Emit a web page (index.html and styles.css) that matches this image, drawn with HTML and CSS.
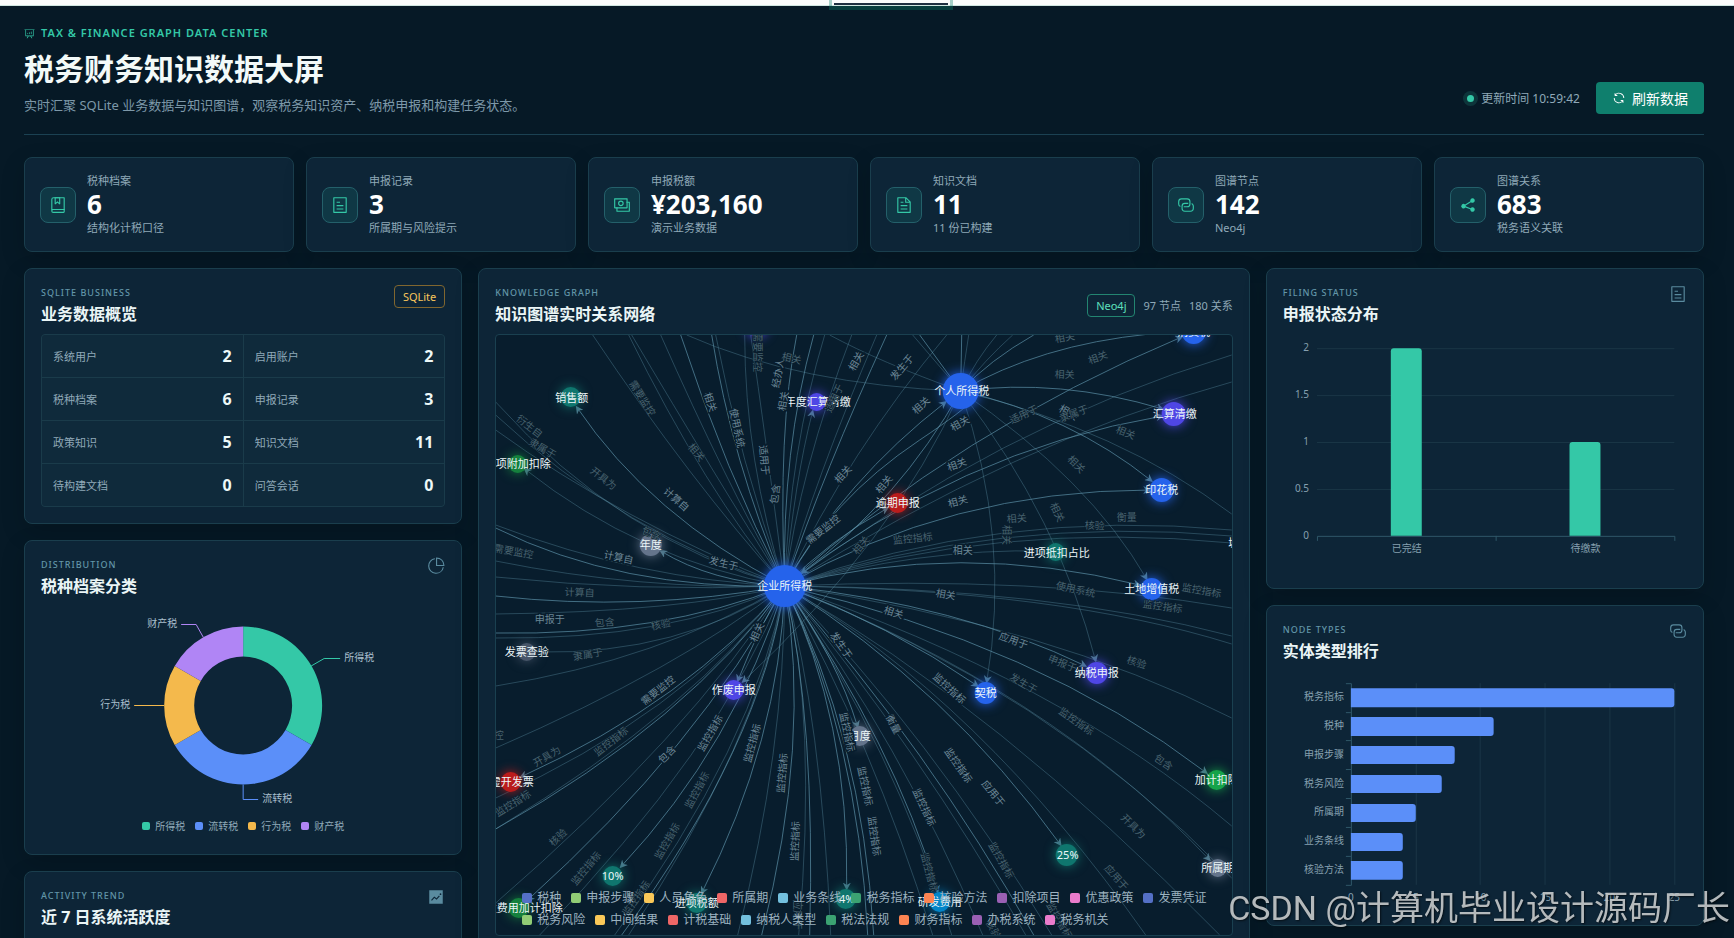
FILE: index.html
```html
<!DOCTYPE html>
<html lang="zh-CN">
<head>
  <meta charset="UTF-8" />
  <meta name="viewport" content="width=device-width, initial-scale=1" />
  <title>税务财务知识数据大屏</title>
  <link rel="stylesheet" href="styles.css">
</head>
<body>

<!-- Icon set -->
<svg class="icon-defs" aria-hidden="true">
  <symbol id="i-board" viewBox="0 0 1024 1024"><path d="m665.216 768 110.848 192h-73.856L591.36 768H433.024L322.176 960H248.32l110.848-192H160a32 32 0 0 1-32-32V192H64a32 32 0 0 1 0-64h896a32 32 0 1 1 0 64h-64v544a32 32 0 0 1-32 32zM832 192H192v512h640zM352 448a32 32 0 0 1 32 32v64a32 32 0 0 1-64 0v-64a32 32 0 0 1 32-32m160-64a32 32 0 0 1 32 32v128a32 32 0 0 1-64 0V416a32 32 0 0 1 32-32m160-64a32 32 0 0 1 32 32v192a32 32 0 1 1-64 0V352a32 32 0 0 1 32-32"/></symbol>
  <symbol id="i-refresh" viewBox="0 0 1024 1024"><path d="M771.776 794.88A384 384 0 0 1 128 512h64a320 320 0 0 0 555.712 216.448H654.72a32 32 0 1 1 0-64h149.056a32 32 0 0 1 32 32v148.928a32 32 0 1 1-64 0v-50.56zM276.288 295.616h92.992a32 32 0 0 1 0 64H220.16a32 32 0 0 1-32-32V178.56a32 32 0 0 1 64 0v50.56A384 384 0 0 1 896.128 512h-64a320 320 0 0 0-555.776-216.384z"/></symbol>
  <symbol id="i-book" viewBox="0 0 1024 1024"><path d="M192 736h640V128H256a64 64 0 0 0-64 64zm64-672h608a32 32 0 0 1 32 32v672a32 32 0 0 1-32 32H160l-32 57.536V192A128 128 0 0 1 256 64"/><path d="M240 800a48 48 0 1 0 0 96h592v-96zm0-64h656v160a64 64 0 0 1-64 64H240a112 112 0 0 1 0-224m144-608v250.88l96-76.8 96 76.8V128zm-64-64h320v381.44a32 32 0 0 1-51.968 24.96L480 384l-108.032 86.4A32 32 0 0 1 320 445.44z"/></symbol>
  <symbol id="i-tickets" viewBox="0 0 1024 1024"><path d="M192 128v768h640V128zm-32-64h704a32 32 0 0 1 32 32v832a32 32 0 0 1-32 32H160a32 32 0 0 1-32-32V96a32 32 0 0 1 32-32m160 448h384v64H320zm0-192h192v64H320zm0 384h384v64H320z"/></symbol>
  <symbol id="i-money" viewBox="0 0 1024 1024"><path d="M256 640v192h640V384H768v-64h150.976c14.272 0 19.456 1.472 24.64 4.288a29.06 29.06 0 0 1 12.16 12.096c2.752 5.184 4.224 10.368 4.224 24.64v493.952c0 14.272-1.472 19.456-4.288 24.64a29.06 29.06 0 0 1-12.096 12.16c-5.184 2.752-10.368 4.224-24.64 4.224H233.024c-14.272 0-19.456-1.472-24.64-4.288a29.06 29.06 0 0 1-12.16-12.096c-2.688-5.184-4.224-10.368-4.224-24.576V640z"/><path d="M768 192H128v448h640zm64-22.976v493.952c0 14.272-1.472 19.456-4.288 24.64a29.06 29.06 0 0 1-12.096 12.16c-5.184 2.752-10.368 4.224-24.64 4.224H105.024c-14.272 0-19.456-1.472-24.64-4.288a29.06 29.06 0 0 1-12.16-12.096C65.536 682.432 64 677.248 64 663.04V169.024c0-14.272 1.472-19.456 4.288-24.64a29.06 29.06 0 0 1 12.096-12.16C85.568 129.536 90.752 128 104.96 128h685.952c14.272 0 19.456 1.472 24.64 4.288a29.06 29.06 0 0 1 12.16 12.096c2.752 5.184 4.224 10.368 4.224 24.64z"/><path d="M448 576a160 160 0 1 1 0-320 160 160 0 0 1 0 320m0-64a96 96 0 1 0 0-192 96 96 0 0 0 0 192"/></symbol>
  <symbol id="i-document" viewBox="0 0 1024 1024"><path d="M832 384H576V128H192v768h640zm-26.496-64L640 154.496V320zM160 64h480l256 256v608a32 32 0 0 1-32 32H160a32 32 0 0 1-32-32V96a32 32 0 0 1 32-32m160 448h384v64H320zm0-192h160v64H320zm0 384h384v64H320z"/></symbol>
  <symbol id="i-connection" viewBox="0 0 1024 1024"><path d="M640 384v64H448a128 128 0 0 0-128 128v128a128 128 0 0 0 128 128h320a128 128 0 0 0 128-128V576a128 128 0 0 0-64-110.848V394.88c74.56 26.368 128 97.472 128 181.056v128a192 192 0 0 1-192 192H448a192 192 0 0 1-192-192V576a192 192 0 0 1 192-192z"/><path d="M384 640v-64h192a128 128 0 0 0 128-128V320a128 128 0 0 0-128-128H256a128 128 0 0 0-128 128v128a128 128 0 0 0 64 110.848v70.272A192.064 192.064 0 0 1 64 448V320a192 192 0 0 1 192-192h320a192 192 0 0 1 192 192v128a192 192 0 0 1-192 192z"/></symbol>
  <symbol id="i-share" viewBox="0 0 1024 1024"><path d="m679.872 348.8-301.76 188.608a127.808 127.808 0 0 1 5.12 52.16l279.936 104.96a128 128 0 1 1-22.464 59.904l-279.872-104.96a128 128 0 1 1-16.64-166.272l301.696-188.608a128 128 0 1 1 33.92 54.272z"/></symbol>
  <symbol id="i-pie" viewBox="0 0 1024 1024"><path d="M448 68.48v64.832A384.128 384.128 0 0 0 512 896a384.128 384.128 0 0 0 378.688-320h64.768A448.128 448.128 0 0 1 64 512 448.128 448.128 0 0 1 448 68.48"/><path d="M576 97.28V448h350.72A384.064 384.064 0 0 0 576 97.28M512 64V33.152A448 448 0 0 1 990.848 512H512z"/></symbol>
  <symbol id="i-trend" viewBox="0 0 1024 1024"><path d="M128 896V128h768v768zm291.712-327.296 128 102.4 180.16-201.792-47.744-42.624-139.84 156.608-128-102.4-180.16 201.792 47.744 42.624zM816 352a48 48 0 1 0-96 0 48 48 0 0 0 96 0"/></symbol>
</svg>

<div class="topbar"><div class="topbar-tab"></div></div>

<main class="screen">
  <header class="screen-header">
    <div class="screen-title">
      <p class="screen-eyebrow"><svg class="icon"><use href="#i-board"/></svg>TAX &amp; FINANCE GRAPH DATA CENTER</p>
      <h1>税务财务知识数据大屏</h1>
      <p class="screen-desc">实时汇聚 SQLite 业务数据与知识图谱，观察税务知识资产、纳税申报和构建任务状态。</p>
    </div>
    <div class="screen-actions">
      <span class="update-time"><i class="dot"></i>更新时间 10:59:42</span>
      <button type="button" class="btn-refresh"><svg class="icon"><use href="#i-refresh"/></svg>刷新数据</button>
    </div>
  </header>

  <!-- Metric cards -->
  <section class="metrics">
    <article class="metric">
      <div class="metric-icon"><svg class="icon"><use href="#i-book"/></svg></div>
      <div><p>税种档案</p><strong>6</strong><p>结构化计税口径</p></div>
    </article>
    <article class="metric">
      <div class="metric-icon"><svg class="icon"><use href="#i-tickets"/></svg></div>
      <div><p>申报记录</p><strong>3</strong><p>所属期与风险提示</p></div>
    </article>
    <article class="metric">
      <div class="metric-icon"><svg class="icon"><use href="#i-money"/></svg></div>
      <div><p>申报税额</p><strong>¥203,160</strong><p>演示业务数据</p></div>
    </article>
    <article class="metric">
      <div class="metric-icon"><svg class="icon"><use href="#i-document"/></svg></div>
      <div><p>知识文档</p><strong>11</strong><p>11 份已构建</p></div>
    </article>
    <article class="metric">
      <div class="metric-icon"><svg class="icon"><use href="#i-connection"/></svg></div>
      <div><p>图谱节点</p><strong>142</strong><p>Neo4j</p></div>
    </article>
    <article class="metric">
      <div class="metric-icon"><svg class="icon"><use href="#i-share"/></svg></div>
      <div><p>图谱关系</p><strong>683</strong><p>税务语义关联</p></div>
    </article>
  </section>

  <section class="board">
    <!-- Left column -->
    <div class="column">
      <section class="panel">
        <div class="panel-head">
          <div><span class="panel-eyebrow">SQLITE BUSINESS</span><h2>业务数据概览</h2></div>
          <span class="badge badge-amber">SQLite</span>
        </div>
        <dl class="overview">
          <div><dt>系统用户</dt><dd>2</dd></div>
          <div><dt>启用账户</dt><dd>2</dd></div>
          <div><dt>税种档案</dt><dd>6</dd></div>
          <div><dt>申报记录</dt><dd>3</dd></div>
          <div><dt>政策知识</dt><dd>5</dd></div>
          <div><dt>知识文档</dt><dd>11</dd></div>
          <div><dt>待构建文档</dt><dd>0</dd></div>
          <div><dt>问答会话</dt><dd>0</dd></div>
        </dl>
      </section>

      <section class="panel">
        <div class="panel-head">
          <div><span class="panel-eyebrow">DISTRIBUTION</span><h2>税种档案分类</h2></div>
          <svg class="icon"><use href="#i-pie"/></svg>
        </div>
        <svg class="chart chart-pie" viewBox="0 0 404 210">
          <path fill="#34c8a7" d="M202 20.500A79 79 0 0 1 270.400 139L244.400 124A49 49 0 0 0 202 50.500Z"/>
          <path fill="#5b8ff9" d="M270.400 139A79 79 0 0 1 133.600 139L159.600 124A49 49 0 0 0 244.400 124Z"/>
          <path fill="#f4b94c" d="M133.600 139A79 79 0 0 1 133.600 60L159.600 75A49 49 0 0 0 159.600 124Z"/>
          <path fill="#b085f5" d="M133.600 60A79 79 0 0 1 202 20.500V50.500A49 49 0 0 0 159.600 75Z"/>
          <g class="pie-lines">
            <path stroke="#34c8a7" d="M270 60L283 52.500H299"/>
            <path stroke="#5b8ff9" d="M202 178.500V193.500H217"/>
            <path stroke="#f4b94c" d="M123 99.500H93"/>
            <path stroke="#b085f5" d="M162 31L155 18.500H140"/>
          </g>
          <g class="pie-labels">
            <text x="303" y="51">所得税</text>
            <text x="221" y="192">流转税</text>
            <text x="89" y="98" text-anchor="end">行为税</text>
            <text x="136" y="17" text-anchor="end">财产税</text>
          </g>
        </svg>
        <ul class="pie-legend">
          <li><i class="c-teal"></i>所得税</li>
          <li><i class="c-sky"></i>流转税</li>
          <li><i class="c-amber"></i>行为税</li>
          <li><i class="c-violet"></i>财产税</li>
        </ul>
      </section>

      <section class="panel panel-trend">
        <div class="panel-head">
          <div><span class="panel-eyebrow">ACTIVITY TREND</span><h2>近 7 日系统活跃度</h2></div>
          <svg class="icon"><use href="#i-trend"/></svg>
        </div>
      </section>
    </div>

    <!-- Knowledge graph -->
    <section class="panel panel-graph">
      <div class="panel-head">
        <div><span class="panel-eyebrow">KNOWLEDGE GRAPH</span><h2>知识图谱实时关系网络</h2></div>
        <div class="graph-meta"><span class="badge badge-teal">Neo4j</span><span>97 节点</span><span>180 关系</span></div>
      </div>
      <div class="graph-box">
        <svg class="graph" viewBox="496 335 736 600" preserveAspectRatio="xMidYMid slice">
          <defs>
            <marker id="arrow" viewBox="0 0 10 10" refX="8" refY="5" markerWidth="8" markerHeight="8" markerUnits="userSpaceOnUse" orient="auto"><path d="M0 0L10 5L0 10L3 5Z"/></marker>
          </defs>

          <g class="edges dim">
            <path d="M785 586Q620 540 496 402"/>
            <path d="M785 586Q625 535 496 415"/>
            <path d="M785 586Q620 520 496 430"/>
            <path d="M785 586Q640 580 496 525"/>
            <path d="M785 586Q640 590 496 561"/>
            <path d="M785 586Q640 592 496 577"/>
            <path d="M785 586Q680 612 496 614"/>
            <path d="M785 586Q670 640 496 638"/>
            <path d="M785 586Q680 655 538 652"/>
            <path d="M785 586Q660 660 496 686"/>
            <path d="M785 586Q680 668 496 748"/>
            <path d="M785 586Q680 715 496 798"/>
            <path d="M785 586Q700 705 496 829"/>
            <path d="M785 586Q690 735 496 903"/>
            <path d="M785 586Q720 750 540 935"/>
            <path d="M785 586Q755 745 615 935"/>
            <path d="M785 586Q760 740 629 935"/>
            <path d="M785 586Q785 750 738 935"/>
            <path d="M785 586Q818 720 799 935"/>
            <path d="M785 586Q822 720 831 935"/>
            <path d="M785 586Q872 740 933 935"/>
            <path d="M785 586Q895 750 952 935"/>
            <path d="M785 586Q900 740 983 935"/>
            <path d="M785 586Q920 750 1026 935"/>
            <path d="M785 586Q930 735 1052 935"/>
            <path d="M785 586Q980 700 1146 935"/>
            <path d="M785 586Q1000 710 1220 935"/>
            <path d="M785 586Q1060 680 1232 826"/>
            <path d="M785 586Q1050 690 1232 878"/>
            <path d="M785 586Q1050 625 1232 718"/>
            <path d="M785 586Q1060 590 1232 644"/>
            <path d="M785 586Q1050 588 1232 636"/>
            <path d="M785 586Q1040 575 1232 608"/>
            <path d="M785 586Q920 548 1047 551"/>
            <path d="M785 586Q1000 508 1232 530"/>
            <path d="M785 586Q1000 515 1232 536"/>
            <path d="M785 586Q1000 520 1232 543"/>
            <path d="M785 586Q1000 425 1232 355"/>
            <path d="M785 586Q1020 440 1232 382"/>
            <path d="M785 586Q690 480 593 335"/>
            <path d="M785 586Q705 490 629 335"/>
            <path d="M785 586Q715 475 632 335"/>
            <path d="M785 586Q725 480 661 335"/>
            <path d="M785 586Q740 460 716 335"/>
            <path d="M785 586Q745 460 745 335"/>
            <path d="M785 586Q790 450 825 335"/>
            <path d="M785 586Q800 470 852 335"/>
            <path d="M785 586Q815 480 877 335"/>
            <path d="M785 586Q850 450 947 335"/>
            <path d="M687 335Q800 385 961 391"/>
            <path d="M830 335Q880 362 961 391"/>
            <path d="M961 391L913 335"/>
            <path d="M961 391Q965 360 969 335"/>
            <path d="M961 391Q976 360 997 335"/>
            <path d="M961 391Q985 360 1013 335"/>
            <path d="M961 391Q1120 430 1232 514"/>
            <path d="M785 586Q765 430 751 335"/>
          </g>
          <g class="edges dim" marker-end="url(#arrow)">
            <path d="M785 586Q640 560 525 469"/>
            <path d="M785 586Q795 480 813 411"/>
            <path d="M961 391Q895 540 743 682"/>
            <path d="M961 391Q1090 480 1147 579"/>
            <path d="M961 391Q1012 540 987 682"/>
            <path d="M961 391Q1060 520 1096 661"/>
            <path d="M785 586Q1050 690 1210 860"/>
          </g>
          <g class="edges">
            <path d="M785 586Q620 590 496 528"/>
            <path d="M785 586Q640 612 496 596"/>
            <path d="M785 586Q660 636 496 633"/>
            <path d="M785 586Q690 720 496 829"/>
            <path d="M785 586Q762 745 622 935"/>
            <path d="M785 586Q812 740 762 935"/>
            <path d="M785 586Q816 720 810 935"/>
            <path d="M785 586Q858 735 868 935"/>
            <path d="M785 586Q862 735 874 935"/>
            <path d="M785 586Q930 750 1034 935"/>
            <path d="M785 586Q725 470 681 335"/>
            <path d="M785 586Q732 460 712 335"/>
            <path d="M785 586Q778 430 797 335"/>
            <path d="M785 586Q782 450 814 335"/>
            <path d="M785 586Q825 470 887 335"/>
            <path d="M785 586Q830 500 920 440T961 391"/>
            <path d="M961 391L920 335"/>
            <path d="M961 391L962 335"/>
            <path d="M961 391Q990 360 1034 335"/>
            <path d="M961 391Q1040 345 1150 334"/>
          </g>
          <g class="edges" marker-end="url(#arrow)">
            <path d="M785 586Q650 515 577 407"/>
            <path d="M785 586Q712 582 661 551"/>
            <path d="M785 586Q690 700 521 777"/>
            <path d="M785 586Q700 745 528 900"/>
            <path d="M785 586Q735 745 621 867"/>
            <path d="M785 586Q760 625 738 681"/>
            <path d="M785 586Q780 740 702 893"/>
            <path d="M785 586Q850 720 847 889"/>
            <path d="M785 586Q838 660 858 727"/>
            <path d="M785 586Q895 745 938 892"/>
            <path d="M785 586Q950 690 1061 845"/>
            <path d="M785 586Q1040 645 1207 773"/>
            <path d="M785 586Q960 605 1086 666"/>
            <path d="M785 586Q890 625 978 686"/>
            <path d="M785 586Q960 540 1140 585"/>
            <path d="M785 586Q950 490 1150 490"/>
            <path d="M785 586Q960 450 1163 416"/>
            <path d="M785 586Q960 430 1182 337"/>
            <path d="M785 586Q830 540 888 508"/>
            <path d="M785 586Q845 480 946 402"/>
            <path d="M961 391Q900 500 802 573"/>
            <path d="M961 391Q1060 378 1163 409"/>
            <path d="M961 391Q1070 415 1152 481"/>
          </g>

          <g class="nodes">
            <circle class="n-indigo" cx="757" cy="327" r="10"/>
            <circle class="n-teal" cx="571" cy="397" r="10"/>
            <circle class="n-green" cx="518" cy="464" r="9"/>
            <circle class="n-slate" cx="651" cy="545" r="11"/>
            <circle class="n-indigo" cx="817" cy="402" r="9"/>
            <circle class="n-blue" cx="785" cy="586" r="21"/>
            <circle class="n-blue" cx="961" cy="391" r="18"/>
            <circle class="n-blue" cx="1194" cy="332" r="12"/>
            <circle class="n-indigo" cx="1174" cy="414" r="12"/>
            <circle class="n-blue" cx="1162" cy="490" r="12"/>
            <circle class="n-red" cx="898" cy="503" r="10"/>
            <circle class="n-teal" cx="1056" cy="552" r="9"/>
            <circle class="n-blue" cx="1152" cy="589" r="11"/>
            <circle class="n-gray" cx="527" cy="652" r="9"/>
            <circle class="n-indigo" cx="734" cy="690" r="10"/>
            <circle class="n-slate" cx="860" cy="736" r="10"/>
            <circle class="n-red" cx="511" cy="782" r="10"/>
            <circle class="n-teal" cx="613" cy="876" r="10"/>
            <circle class="n-green" cx="519" cy="908" r="10"/>
            <circle class="n-teal" cx="697" cy="903" r="10"/>
            <circle class="n-teal" cx="846" cy="899" r="10"/>
            <circle class="n-blue" cx="986" cy="693" r="11"/>
            <circle class="n-indigo" cx="1097" cy="673" r="11"/>
            <circle class="n-lime" cx="1217" cy="780" r="10"/>
            <circle class="n-teal" cx="1067" cy="855" r="11"/>
            <circle class="n-slate" cx="1218" cy="868" r="9"/>
            <circle class="n-cyan" cx="940" cy="902" r="10"/>
          </g>
          <g class="node-labels">
            <text x="572" y="397">销售额</text>
            <text x="518" y="463">专项附加扣除</text>
            <text x="651" y="544">年度</text>
            <text x="818" y="401">年度汇算清缴</text>
            <text x="785" y="585">企业所得税</text>
            <text x="962" y="390">个人所得税</text>
            <text x="1194" y="331">消费税</text>
            <text x="1175" y="413">汇算清缴</text>
            <text x="1162" y="489">印花税</text>
            <text x="898" y="502">逾期申报</text>
            <text x="1057" y="552">进项抵扣占比</text>
            <text x="1152" y="588">土地增值税</text>
            <text x="1245" y="542">城建税</text>
            <text x="527" y="651">发票查验</text>
            <text x="734" y="689">作废申报</text>
            <text x="860" y="735">月度</text>
            <text x="512" y="781">虚开发票</text>
            <text x="613" y="875">10%</text>
            <text x="519" y="907">研发费用加计扣除</text>
            <text x="697" y="902">进项税额</text>
            <text x="847" y="898">4%</text>
            <text x="986" y="692">契税</text>
            <text x="1097" y="672">纳税申报</text>
            <text x="1217" y="779">加计扣除</text>
            <text x="1068" y="854">25%</text>
            <text x="1218" y="867">所属期</text>
            <text x="940" y="901">研发费用</text>
          </g>

          <g class="edge-labels">
            <text transform="translate(711 402) rotate(72)">相关</text>
            <text transform="translate(738 428) rotate(78)">使用系统</text>
            <text transform="translate(765 460) rotate(84)">适用于</text>
            <text transform="translate(775 494) rotate(-82)">包含</text>
            <text transform="translate(677 499) rotate(42)">计算自</text>
            <text transform="translate(619 557) rotate(12)">计算自</text>
            <text transform="translate(724 563) rotate(14)">发生于</text>
            <text transform="translate(778 373) rotate(-80)">经办人</text>
            <text transform="translate(783 401) rotate(-80)">相关</text>
            <text transform="translate(856 361) rotate(-60)">相关</text>
            <text transform="translate(843 474) rotate(-48)">相关</text>
            <text transform="translate(823 529) rotate(-38)">需要监控</text>
            <text transform="translate(884 484) rotate(-50)">相关</text>
            <text transform="translate(902 367) rotate(-50)">发生于</text>
            <text transform="translate(921 405) rotate(-42)">相关</text>
            <text transform="translate(960 423) rotate(-30)">相关</text>
            <text transform="translate(1069 412) rotate(30)">相关</text>
            <text transform="translate(957 464) rotate(-20)">相关</text>
            <text transform="translate(958 501) rotate(-15)">相关</text>
            <text transform="translate(963 550)">相关</text>
            <text transform="translate(946 594) rotate(10)">相关</text>
            <text transform="translate(894 612) rotate(18)">相关</text>
            <text transform="translate(1014 640) rotate(20)">应用于</text>
            <text transform="translate(950 688) rotate(42)">监控指标</text>
            <text transform="translate(894 724) rotate(62)">衡量</text>
            <text transform="translate(959 765) rotate(55)">监控指标</text>
            <text transform="translate(994 793) rotate(50)">应用于</text>
            <text transform="translate(925 807) rotate(65)">监控指标</text>
            <text transform="translate(550 619)">申报于</text>
            <text transform="translate(658 690) rotate(-38)">需要监控</text>
            <text transform="translate(757 632) rotate(-65)">相关</text>
            <text transform="translate(842 645) rotate(55)">发生于</text>
            <text transform="translate(710 733) rotate(-60)">监控指标</text>
            <text transform="translate(752 743) rotate(-75)">监控指标</text>
            <text transform="translate(667 754) rotate(-45)">包含</text>
            <text transform="translate(848 732) rotate(78)">监控指标</text>
            <text transform="translate(782 773) rotate(-85)">监控指标</text>
            <text transform="translate(866 786) rotate(78)">监控指标</text>
            <text transform="translate(795 841) rotate(-88)">监控指标</text>
            <text transform="translate(875 836) rotate(82)">监控指标</text>
          </g>
          <g class="edge-labels dim">
            <text transform="translate(643 398) rotate(58)">需要监控</text>
            <text transform="translate(697 452) rotate(50)">相关</text>
            <text transform="translate(604 478) rotate(38)">开具为</text>
            <text transform="translate(543 448) rotate(30)">隶属于</text>
            <text transform="translate(530 426) rotate(38)">衍生自</text>
            <text transform="translate(514 551) rotate(10)">需要监控</text>
            <text transform="translate(652 533) rotate(20)">包含</text>
            <text transform="translate(580 592) rotate(2)">计算自</text>
            <text transform="translate(758 352) rotate(90)">需要监控</text>
            <text transform="translate(792 358) rotate(12)">相关</text>
            <text transform="translate(834 398) rotate(-65)">适用于</text>
            <text transform="translate(861 545) rotate(-50)">相关</text>
            <text transform="translate(1024 414) rotate(-25)">适用于</text>
            <text transform="translate(1074 413) rotate(-20)">隶属于</text>
            <text transform="translate(1126 432) rotate(22)">相关</text>
            <text transform="translate(1098 357) rotate(-20)">相关</text>
            <text transform="translate(1065 374) rotate(2)">相关</text>
            <text transform="translate(1065 337) rotate(-10)">相关</text>
            <text transform="translate(1077 464) rotate(45)">相关</text>
            <text transform="translate(1017 518) rotate(-5)">相关</text>
            <text transform="translate(1058 512) rotate(65)">相关</text>
            <text transform="translate(1095 525) rotate(2)">核验</text>
            <text transform="translate(1127 517)">衡量</text>
            <text transform="translate(1007 535) rotate(90)">相关</text>
            <text transform="translate(913 538) rotate(-6)">监控指标</text>
            <text transform="translate(1076 589) rotate(12)">使用系统</text>
            <text transform="translate(1202 590) rotate(10)">监控指标</text>
            <text transform="translate(1163 606) rotate(8)">监控指标</text>
            <text transform="translate(1063 663) rotate(22)">申报于</text>
            <text transform="translate(1137 662) rotate(18)">核验</text>
            <text transform="translate(1024 683) rotate(30)">发生于</text>
            <text transform="translate(1077 721) rotate(35)">监控指标</text>
            <text transform="translate(1164 762) rotate(35)">包含</text>
            <text transform="translate(1134 826) rotate(45)">开具为</text>
            <text transform="translate(1002 860) rotate(60)">监控指标</text>
            <text transform="translate(1117 877) rotate(48)">应用于</text>
            <text transform="translate(930 872) rotate(75)">监控指标</text>
            <text transform="translate(1060 920) rotate(60)">监控指标</text>
            <text transform="translate(994 929) rotate(62)">核验</text>
            <text transform="translate(605 622) rotate(-5)">包含</text>
            <text transform="translate(661 624) rotate(-12)">核验</text>
            <text transform="translate(588 654) rotate(-10)">隶属于</text>
            <text transform="translate(611 741) rotate(-38)">监控指标</text>
            <text transform="translate(547 756) rotate(-30)">开具为</text>
            <text transform="translate(697 790) rotate(-62)">监控指标</text>
            <text transform="translate(513 803) rotate(-32)">监控指标</text>
            <text transform="translate(558 837) rotate(-42)">核验</text>
            <text transform="translate(667 841) rotate(-60)">监控指标</text>
            <text transform="translate(586 868) rotate(-50)">监控指标</text>
            <text transform="translate(636 898) rotate(-55)">监控指标</text>
            <text transform="translate(798 915) rotate(90)">应用于</text>
            <text transform="translate(484 735)">需要监控</text>
          </g>
        </svg>
        <ul class="graph-legend">
          <li><i class="k-1"></i>税种</li>
          <li><i class="k-2"></i>申报步骤</li>
          <li><i class="k-3"></i>人员角色</li>
          <li><i class="k-4"></i>所属期</li>
          <li><i class="k-5"></i>业务条线</li>
          <li><i class="k-6"></i>税务指标</li>
          <li><i class="k-7"></i>核验方法</li>
          <li><i class="k-8"></i>扣除项目</li>
          <li><i class="k-9"></i>优惠政策</li>
          <li><i class="k-1"></i>发票凭证</li>
          <li><i class="k-2"></i>税务风险</li>
          <li><i class="k-3"></i>中间结果</li>
          <li><i class="k-4"></i>计税基础</li>
          <li><i class="k-5"></i>纳税人类型</li>
          <li><i class="k-6"></i>税法法规</li>
          <li><i class="k-7"></i>财务指标</li>
          <li><i class="k-8"></i>办税系统</li>
          <li><i class="k-9"></i>税务机关</li>
        </ul>
      </div>
    </section>

    <!-- Right column -->
    <div class="column">
      <section class="panel">
        <div class="panel-head">
          <div><span class="panel-eyebrow">FILING STATUS</span><h2>申报状态分布</h2></div>
          <svg class="icon"><use href="#i-tickets"/></svg>
        </div>
        <svg class="chart chart-bar" viewBox="0 0 405 238">
          <path class="grid" d="M34 14.500H392M34 61.500H392M34 108.500H392M34 155.500H392"/>
          <path class="axis" d="M34.500 207V202.500H392.500V207M213.500 202V207"/>
          <path class="bar-teal" d="M108 202V17a3 3 0 0 1 3-3h25a3 3 0 0 1 3 3V202Z"/>
          <path class="bar-teal" d="M287 202V111a3 3 0 0 1 3-3h25a3 3 0 0 1 3 3V202Z"/>
          <g class="tick" text-anchor="end">
            <text x="26" y="13">2</text>
            <text x="26" y="60">1.5</text>
            <text x="26" y="107">1</text>
            <text x="26" y="154">0.5</text>
            <text x="26" y="201">0</text>
          </g>
          <g class="tick" text-anchor="middle">
            <text x="124" y="214">已完结</text>
            <text x="303" y="214">待缴款</text>
          </g>
        </svg>
      </section>

      <section class="panel">
        <div class="panel-head">
          <div><span class="panel-eyebrow">NODE TYPES</span><h2>实体类型排行</h2></div>
          <svg class="icon"><use href="#i-connection"/></svg>
        </div>
        <svg class="chart chart-bar" viewBox="0 0 405 238">
          <path class="grid" d="M133.500 12V214M197.500 12V214M262.500 12V214M327.500 12V214M392.500 12V214"/>
          <path class="axis" d="M63 12.500H68.500V214.500H63M63 41.500H68M63 69.500H68M63 98.500H68M63 127.500H68M63 156.500H68M63 185.500H68"/>
          <g class="bars-blue">
            <path d="M68 17H389a3 3 0 0 1 3 3v13a3 3 0 0 1-3 3H68Z"/>
            <path d="M68 46H208a3 3 0 0 1 3 3v13a3 3 0 0 1-3 3H68Z"/>
            <path d="M68 75H169a3 3 0 0 1 3 3v12a3 3 0 0 1-3 3H68Z"/>
            <path d="M68 104H156a3 3 0 0 1 3 3v12a3 3 0 0 1-3 3H68Z"/>
            <path d="M68 133H130a3 3 0 0 1 3 3v12a3 3 0 0 1-3 3H68Z"/>
            <path d="M68 162H117a3 3 0 0 1 3 3v12a3 3 0 0 1-3 3H68Z"/>
            <path d="M68 190H117a3 3 0 0 1 3 3v13a3 3 0 0 1-3 3H68Z"/>
          </g>
          <g class="tick" text-anchor="end">
            <text x="61" y="25">税务指标</text>
            <text x="61" y="54">税种</text>
            <text x="61" y="83">申报步骤</text>
            <text x="61" y="112">税务风险</text>
            <text x="61" y="140">所属期</text>
            <text x="61" y="169">业务条线</text>
            <text x="61" y="198">核验方法</text>
          </g>
          <g class="tick" text-anchor="middle">
            <text x="68" y="226">0</text>
            <text x="133" y="226">5</text>
            <text x="198" y="226">10</text>
            <text x="263" y="226">15</text>
            <text x="327" y="226">20</text>
            <text x="392" y="226">25</text>
          </g>
        </svg>
      </section>
    </div>
  </section>
</main>

<div class="watermark">CSDN @计算机毕业设计源码厂长</div>

</body>
</html>
```
FILE: styles.css
```css
* {
  margin: 0;
  padding: 0;
  box-sizing: border-box;
}

body {
  font-family: "Noto Sans", "Noto Sans CJK SC", sans-serif;
  background: #061926;
  color: #8fa9b8;
  height: 100vh;
  overflow: hidden;
}

ul {
  list-style: none;
}

.icon-defs {
  position: absolute;
  width: 0;
  height: 0;
}

.icon {
  width: 18px;
  height: 18px;
  fill: currentColor;
  flex-shrink: 0;
}

/* Bottom edge of the app bar with the focused tab */
.topbar {
  position: relative;
  height: 6px;
  background: #fafcfc;
  border-bottom: 1px solid #cfe6e1;
}

.topbar-tab {
  position: absolute;
  top: 0;
  left: 829px;
  width: 124px;
  height: 10px;
  border: 3px solid rgba(15, 127, 109, 0.36);
  border-width: 0 3px 4px;
}

.topbar-tab::after {
  content: "";
  position: absolute;
  top: 3px;
  left: 2px;
  right: 2px;
  height: 2px;
  background: #1e2f40;
}

.screen {
  padding: 18px 30px 24px 24px;
}

/* Header */
.screen-header {
  display: flex;
  justify-content: space-between;
  align-items: flex-end;
  padding-bottom: 20px;
  border-bottom: 1px solid #1b4152;
}

.screen-title {
  display: flex;
  flex-direction: column;
  gap: 9px;
}

.screen-eyebrow {
  display: flex;
  align-items: center;
  gap: 6px;
  font-size: 11px;
  line-height: 18px;
  font-weight: 600;
  letter-spacing: 1px;
  color: #34c8a7;
}

.screen-eyebrow .icon {
  width: 11px;
  height: 11px;
}

h1 {
  font-size: 30px;
  line-height: 36px;
  font-weight: 700;
  color: #f3faf9;
}

.screen-desc {
  font-size: 13px;
  line-height: 18px;
  color: #7d98a9;
}

.screen-actions {
  display: flex;
  align-items: center;
  gap: 16px;
}

.update-time {
  display: flex;
  align-items: center;
  gap: 7px;
  font-size: 12px;
}

.dot {
  width: 7px;
  height: 7px;
  border-radius: 50%;
  background: #34c8a7;
  box-shadow: 0 0 0 4px rgba(52, 200, 167, 0.16);
}

.btn-refresh {
  display: flex;
  align-items: center;
  justify-content: center;
  gap: 6px;
  height: 32px;
  padding: 0 16px;
  border: none;
  border-radius: 4px;
  background: #0f7f6d;
  color: #fff;
  font-family: inherit;
  font-size: 14px;
  cursor: pointer;
}

.btn-refresh .icon {
  width: 14px;
  height: 14px;
}

/* Metric cards */
.metrics {
  display: grid;
  grid-template-columns: repeat(6, 1fr);
  gap: 12px;
  margin: 22px 0 16px;
}

.metric,
.panel {
  background: #0d2537;
  border: 1px solid #1a3e4d;
  border-radius: 8px;
  box-shadow: 0 8px 24px rgba(0, 0, 0, 0.16);
}

.metric {
  display: flex;
  align-items: center;
  gap: 11px;
  padding: 15px;
}

.metric-icon {
  display: flex;
  align-items: center;
  justify-content: center;
  width: 36px;
  height: 36px;
  border: 1px solid #24606a;
  border-radius: 8px;
  background: #0f3845;
  color: #34c8a7;
}

.metric p {
  font-size: 11px;
  line-height: 16px;
}

.metric strong {
  display: block;
  font-size: 26px;
  line-height: 31px;
  color: #fff;
}

/* Panels */
.board {
  display: grid;
  grid-template-columns: 1fr 1.76fr 1fr;
  gap: 16px;
  align-items: start;
}

.column {
  display: grid;
  gap: 16px;
}

.panel {
  padding: 16px;
  min-width: 0;
}

.panel-head {
  display: flex;
  justify-content: space-between;
  align-items: flex-start;
  height: 49px;
}

.panel-head > .icon {
  color: #5a8b9f;
}

.panel-eyebrow {
  display: block;
  font-size: 9px;
  line-height: 16px;
  font-weight: 500;
  letter-spacing: 1px;
  color: #6295a8;
}

h2 {
  font-size: 16px;
  line-height: 26px;
  font-weight: 700;
  color: #eaf5f6;
}

.badge {
  padding: 0 8px;
  border: 1px solid;
  border-radius: 4px;
  font-size: 11px;
  line-height: 21px;
}

.badge-amber {
  border-color: #80662f;
  color: #f8c65c;
}

.badge-teal {
  border-color: #238571;
  color: #5ee0bd;
}

.overview {
  display: grid;
  grid-template-columns: 1fr 1fr;
  gap: 1px;
  background: #1a3b4a;
  border: 1px solid #1a3b4a;
  border-radius: 4px;
  overflow: hidden;
}

.overview div {
  display: flex;
  justify-content: space-between;
  align-items: center;
  height: 42px;
  padding: 0 11px;
  background: #0f2a3b;
}

.overview dt {
  font-size: 11px;
}

.overview dd {
  font-size: 16px;
  font-weight: 700;
  color: #edf8f8;
}

.panel-trend {
  min-height: 260px;
}

/* Charts */
.chart {
  display: block;
  width: 100%;
  font-size: 10px;
}

.chart text,
.graph text {
  dominant-baseline: central;
}

.chart-pie {
  height: 210px;
}

.chart-bar {
  height: 238px;
}

.pie-lines {
  fill: none;
  stroke-width: 1;
}

.pie-labels {
  fill: #a9bfcc;
}

.pie-legend {
  display: flex;
  justify-content: center;
  gap: 10px;
  height: 22px;
  font-size: 10px;
  line-height: 20px;
}

.pie-legend li {
  display: flex;
  align-items: center;
  gap: 5px;
  height: 20px;
}

.pie-legend i {
  width: 8px;
  height: 8px;
  border-radius: 2px;
}

.c-teal { background: #34c8a7; }
.c-sky { background: #5b8ff9; }
.c-amber { background: #f4b94c; }
.c-violet { background: #b085f5; }

.grid {
  fill: none;
  stroke: #1a3646;
}

.axis {
  fill: none;
  stroke: #2f5768;
}

.bar-teal {
  fill: #34c8a7;
}

.bars-blue {
  fill: #5b8ff9;
}

.tick {
  fill: #86a0af;
}

/* Knowledge graph */
.graph-meta {
  display: flex;
  align-items: center;
  gap: 8px;
  height: 40px;
  font-size: 11px;
}

.graph-box {
  position: relative;
  border: 1px solid #1a4050;
  border-radius: 4px;
  background: #081d2d;
  overflow: hidden;
}

.graph {
  display: block;
  width: 100%;
  height: 600px;
}

.edges {
  fill: none;
  stroke: #5b90a6;
  stroke-opacity: 0.7;
}

.edges.dim {
  stroke-opacity: 0.38;
}

#arrow path {
  fill: #4c7a8e;
  stroke: none;
}

.n-blue { fill: #2563eb; filter: drop-shadow(0 0 6px #2563eb); }
.n-indigo { fill: #4f46e5; filter: drop-shadow(0 0 6px #4f46e5); }
.n-teal { fill: #0f766e; filter: drop-shadow(0 0 6px #0f766e); }
.n-green { fill: #15803d; filter: drop-shadow(0 0 6px #15803d); }
.n-lime { fill: #16a34a; filter: drop-shadow(0 0 6px #16a34a); }
.n-slate { fill: #64748b; filter: drop-shadow(0 0 6px #64748b); }
.n-gray { fill: #475569; filter: drop-shadow(0 0 6px #475569); }
.n-red { fill: #b91c1c; filter: drop-shadow(0 0 6px #b91c1c); }
.n-cyan { fill: #0284c7; filter: drop-shadow(0 0 6px #0284c7); }

.node-labels {
  fill: #edf7f9;
  font-size: 11px;
  text-anchor: middle;
}

.edge-labels {
  fill: #6c8796;
  stroke: #081d2d;
  stroke-width: 3px;
  paint-order: stroke;
  font-size: 10px;
  text-anchor: middle;
}

.edge-labels.dim {
  fill: #48636f;
  stroke-width: 1px;
}

.graph-legend {
  position: absolute;
  left: 26px;
  right: 20px;
  bottom: 4px;
  display: flex;
  flex-wrap: wrap;
  gap: 0 10px;
  font-size: 12px;
  line-height: 22px;
  color: #9db3c0;
}

.graph-legend li {
  display: flex;
  align-items: center;
  gap: 5px;
}

.graph-legend i {
  width: 10px;
  height: 10px;
  border-radius: 2px;
}

.k-1 { background: #5470c6; }
.k-2 { background: #91cc75; }
.k-3 { background: #fac858; }
.k-4 { background: #ee6666; }
.k-5 { background: #73c0de; }
.k-6 { background: #3ba272; }
.k-7 { background: #fc8452; }
.k-8 { background: #9a60b4; }
.k-9 { background: #ea7ccc; }

.watermark {
  position: fixed;
  right: 4px;
  bottom: 8px;
  font-family: Roboto, "Noto Sans CJK SC", sans-serif;
  font-size: 34px;
  line-height: 44px;
  color: rgba(205, 208, 210, 0.88);
  text-shadow: 1px 1px 2px rgba(0, 0, 0, 0.6);
  white-space: nowrap;
  pointer-events: none;
}
```
